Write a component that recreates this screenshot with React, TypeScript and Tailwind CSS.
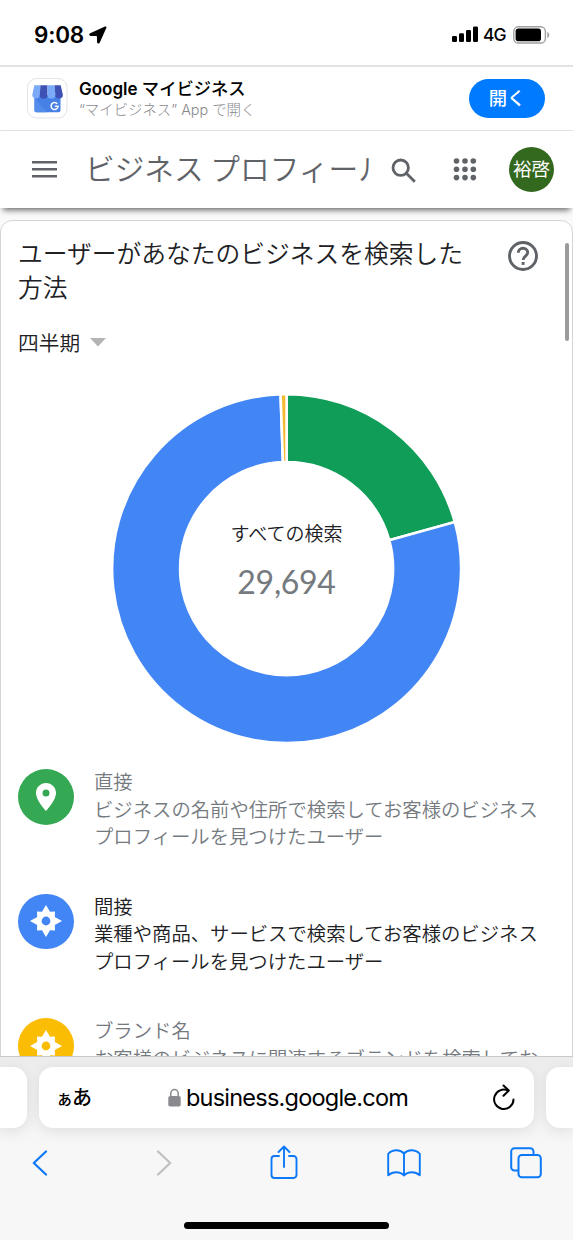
import React from "react";

type LegendItem = {
  title: string;
  lines: string[];
  color: string;
  text: string;
  icon: "pin" | "compass";
};

const legend: LegendItem[] = [
  {
    title: "直接",
    lines: ["ビジネスの名前や住所で検索してお客様のビジネス", "プロフィールを見つけたユーザー"],
    color: "bg-[#34a853]",
    text: "text-[#757a7f]",
    icon: "pin",
  },
  {
    title: "間接",
    lines: ["業種や商品、サービスで検索してお客様のビジネス", "プロフィールを見つけたユーザー"],
    color: "bg-[#4285f4]",
    text: "text-[#202124]",
    icon: "compass",
  },
  {
    title: "ブランド名",
    lines: ["お客様のビジネスに関連するブランドを検索してお"],
    color: "bg-[#fbbc04]",
    text: "text-[#757a7f]",
    icon: "compass",
  },
];

const slices = [
  { value: 20.7, color: "#109d58" },
  { value: 78.75, color: "#4285f4" },
  { value: 0.55, color: "#f4b92f" },
];

const StatusBar = () => (
  <div className="h-[67px] shrink-0 border-b-2 border-[#e2e2e4] flex justify-between pl-[34px] pr-[23px] pt-[4px]">
    <div className="flex items-center gap-[5px]">
      <span className="font-['Inter'] font-semibold text-[22.5px] tracking-[-0.2px]">9:08</span>
      <svg width="18" height="18" viewBox="0 0 18 18">
        <path d="M16 .5 1.2 7.2C-.2 7.900 0 9.800 1.600 9.900l5.700.2c.4 0 .6.200.6.600l.2 5.500c.1 1.700 2 1.900 2.700.4L17.400 1.800c.4-.9-.4-1.700-1.400-1.300z" />
      </svg>
    </div>
    <div className="flex items-center">
      <svg width="27" height="17" viewBox="0 0 27 17">
        <rect x="0" y="10" width="5" height="6" rx="1.3" />
        <rect x="7" y="7.3" width="5" height="8.7" rx="1.3" />
        <rect x="14" y="4" width="5" height="12" rx="1.3" />
        <rect x="21" y="0.5" width="5" height="15.5" rx="1.3" />
      </svg>
      <span className="font-['Inter'] font-medium text-[17.5px] ml-[4px] mt-[1px] w-[24px] tracking-[-0.9px]">4G</span>
      <svg className="ml-[6px]" width="37" height="18" viewBox="0 0 37 18">
        <rect x="0.8" y="0.8" width="31.6" height="16.2" rx="4.6" fill="none" stroke="#a0a0a0" strokeWidth="1.4" />
        <rect x="2.6" y="2.6" width="25.4" height="12.6" rx="2.8" />
        <path d="M34.3 6v6c1.2-.5 2-1.6 2-3s-.8-2.5-2-3z" fill="#a0a0a0" />
      </svg>
    </div>
  </div>
);

const StoreIcon = () => (
  <svg width="41" height="41" viewBox="0 0 41 41">
    <rect x="0.5" y="0.5" width="39.5" height="39.5" rx="9" fill="#fff" stroke="#e3e3e5" />
    <path d="M7.5 17h26v15.500a1.800 1.800 0 0 1-1.800 1.800H9.300a1.800 1.800 0 0 1-1.800-1.800z" fill="#4781e6" />
    <path d="M7.500 20 20 34.300H9.300a1.800 1.800 0 0 1-1.800-1.800z" fill="#548cec" />
    <path d="M7.300 7.200h6.400l-1 9.500a3.700 3.700 0 0 1-7.400 0z" fill="#7aaaf8" />
    <path d="M13.500 7.200h7v9.500a3.900 3.900 0 0 1-7.800 0z" fill="#3e51b5" />
    <path d="M20.500 7.200h7l.8 9.500a3.900 3.900 0 0 1-7.800 0z" fill="#7aaaf8" />
    <path d="M27.500 7.200h6.200l2.200 9.500a3.800 3.800 0 0 1-7.600 0z" fill="#3e51b5" />
    <path d="M30.300 25.800a3.500 3.500 0 1 0 .8 2.500h-3.300" fill="none" stroke="#fff" strokeWidth="1.500" />
  </svg>
);

const AppBanner = () => (
  <div className="h-[64px] shrink-0 border-b border-[#e3e3e6] flex items-center pl-[27px] pr-[28px]">
    <StoreIcon />
    <div className="ml-[11px] mt-[-1px] flex-1 whitespace-nowrap">
      <p className="font-['Inter','Noto_Sans_CJK_JP',sans-serif] font-semibold text-[17px] leading-[22px]">
        Google <span className="font-['Noto_Sans_CJK_JP'] font-medium text-[17.3px]">マイビジネス</span>
      </p>
      <p className="font-['Inter','Noto_Sans_CJK_JP',sans-serif] font-light text-[14.4px] leading-[20px] text-[#8a8a8e]">
        “マイビジネス” App で開く
      </p>
    </div>
    <button className="w-[76px] h-[39px] rounded-full bg-[#007aff] text-white font-medium text-[18.3px] pb-[1px]">
      開く
    </button>
  </div>
);

const Header = () => (
  <div className="h-[77px] shrink-0 relative z-10 bg-white flex items-center pl-[32px] pr-[19px] shadow-[0_5px_6px_-3px_rgba(0,0,0,0.6)]">
    <svg className="mt-[-2px]" width="25" height="18" viewBox="0 0 25 18" fill="#5f6368">
      <path d="M0 1h25v2.500H0zM0 8h25v2.500H0zM0 15h25v2.500H0z" />
    </svg>
    <h1 className="ml-[28px] mt-[-4px] w-[286px] overflow-hidden whitespace-nowrap font-[350] text-[29.700px] leading-[44px] text-[#5f6368]">
      ビジネス プロフィール
    </h1>
    <svg className="ml-[20px] mt-[2px]" width="26" height="26" viewBox="0 0 26 26" fill="none" stroke="#5f6368" strokeWidth="2.800">
      <circle cx="9.700" cy="9.700" r="7.700" />
      <path d="m15.300 15.300 8.500 8.500" />
    </svg>
    <svg className="ml-[36px]" width="24" height="24" viewBox="0 0 24 24" fill="#5f6368">
      {[3, 11.3, 19.6].map((y) => [3.5, 12, 20.3].map((x) => <circle key={`${x}-${y}`} cx={x} cy={y} r="2.800" />))}
    </svg>
    <div className="ml-auto w-[45px] h-[45px] rounded-full bg-[#33691e] text-white text-[18.500px] flex items-center justify-center whitespace-nowrap pb-[2px]">
      裕啓
    </div>
  </div>
);

const Donut = () => {
  const cx = 173.6;
  const cy = 173.6;
  const outer = 174.5;
  const inner = 106.5;
  const point = (r: number, pct: number) => {
    const a = (pct / 100) * Math.PI * 2;
    return `${cx + r * Math.sin(a)} ${cy - r * Math.cos(a)}`;
  };
  let start = 0;

  return (
    <div className="relative w-[349px] h-[348px] mx-auto">
      <svg className="ml-[1px]" width="348" height="348" viewBox="0 0 348 348">
        {slices.map((s) => {
          const from = start;
          const to = start + s.value;
          start = to;
          const large = s.value > 50 ? 1 : 0;
          return (
            <path
              key={s.color}
              fill={s.color}
              stroke="#fff"
              strokeWidth="2.600"
              d={`M${point(outer, from)}A${outer} ${outer} 0 ${large} 1 ${point(outer, to)}L${point(inner, to)}A${inner} ${inner} 0 ${large} 0 ${point(inner, from)}z`}
            />
          );
        })}
      </svg>
      <div className="absolute inset-0 flex flex-col items-center pt-[124px]">
        <p className="text-[19px] leading-[28px] font-[350] text-[#202124]">すべての検索</p>
        <p className="font-['Lato'] text-[32px] leading-[40px] tracking-[-0.3px] mt-[15px] text-[#757a7f]">29,694</p>
      </div>
    </div>
  );
};

const LegendIcon = ({ icon }: { icon: "pin" | "compass" }) =>
  icon === "pin" ? (
    <svg width="20" height="28" viewBox="0 0 20 28" fill="#fff">
      <path
        fillRule="evenodd"
        d="M10 0C4.500 0 0 4.400 0 9.900 0 17.200 10 28 10 28s10-10.800 10-18.100C20 4.400 15.500 0 10 0zm0 13.400a3.500 3.500 0 1 1 0-7 3.500 3.500 0 0 1 0 7z"
      />
    </svg>
  ) : (
    <svg width="32" height="32" viewBox="0 0 32 32" fill="#fff">
      <path
        fillRule="evenodd"
        d="M16 0l4 6.700 5-.2-.2 5.500L32 16l-7.200 4 .2 5.500-5-.2L16 32l-4-6.700-5 .2.200-5.500L0 16l7.200-4L7 6.500l5 .2zM16 11.600a4.400 4.400 0 1 0 0 8.800 4.400 4.400 0 0 0 0-8.800z"
      />
    </svg>
  );

const SearchCard = () => (
  <div className="relative mt-[12px] h-[860px] border border-[#d3d5d9] rounded-[12px] bg-white px-[17px]">
    <div className="flex justify-between pt-[15px]">
      <h2 className="text-[24.750px] leading-[33.500px] font-[350] text-[#202124] whitespace-nowrap">
        ユーザーがあなたのビジネスを検索した
        <br />
        方法
      </h2>
      <svg className="mt-[4px] mr-[16px]" width="32" height="32" viewBox="0 0 32 32" fill="none" stroke="#5f6368" strokeWidth="2.900">
        <circle cx="16" cy="16" r="13.500" />
        <path d="M11.300 12.800c0-2.700 2-4.500 4.700-4.500s4.700 1.800 4.700 4.300c0 3.300-4.600 3.700-4.600 7.300" />
        <path d="M16.100 22v2.900" />
      </svg>
    </div>
    <div className="flex items-center gap-[10px] mt-[23px] h-[32px]">
      <span className="text-[20.700px] leading-[32px] mt-[-1px] font-[350] text-[#202124]">四半期</span>
      <svg className="mt-[1px]" width="16" height="9" viewBox="0 0 16 9" fill="#b4b4b4">
        <path d="M0 0h16L8 8.500z" />
      </svg>
    </div>
    <div className="mt-[37px]">
      <Donut />
    </div>
    <div className="mt-[25px]">
      {legend.map((item) => (
        <div key={item.title} className="flex h-[124.600px]">
          <div className={`w-[55.5px] h-[55.5px] mt-[1px] shrink-0 rounded-full flex items-center justify-center ${item.color}`}>
            <LegendIcon icon={item.icon} />
          </div>
          <div className={`ml-[20.5px] text-[19.350px] leading-[27.700px] font-[350] whitespace-nowrap ${item.text}`}>
            <p>{item.title}</p>
            {item.lines.map((line) => (
              <p key={line}>{line}</p>
            ))}
          </div>
        </div>
      ))}
    </div>
    <div className="absolute right-[3px] top-[22px] w-[4px] h-[98px] rounded-full bg-[#9b9b9b]" />
  </div>
);

const BrowserBar = () => (
  <div className="h-[184px] shrink-0 border-t border-[#c9c9cb] bg-linear-to-b from-[#ececec] to-[#f7f7f7] to-50% flex flex-col relative z-10">
    <div className="flex gap-[12px] mt-[10px] h-[61px]">
      <div className="w-[27px] rounded-r-[14px] bg-white shadow-[0_3px_14px_rgba(0,0,0,0.09)]" />
      <div className="w-[495px] rounded-[14px] bg-white shadow-[0_3px_14px_rgba(0,0,0,0.09)] flex items-center pl-[17px] pr-[19px]">
        <span className="w-[112px] font-medium text-[20px] leading-[30px] tracking-[-1px] whitespace-nowrap">
          <span className="text-[17px]">ぁ</span>あ
        </span>
        <svg width="13" height="19" viewBox="0 0 13 19">
          <path d="M2.800 9V5.300a3.700 3.700 0 0 1 7.400 0V9" fill="none" stroke="#8a8a8e" strokeWidth="1.500" />
          <rect x="0.300" y="8" width="12.400" height="10.500" rx="1.800" fill="#8a8a8e" />
        </svg>
        <span className="ml-[5px] font-['Inter'] text-[23.500px] leading-[30px] tracking-[-0.780px]">business.google.com</span>
        <svg className="ml-auto" width="22" height="27" viewBox="0 0 22 27" fill="none" stroke="#000" strokeWidth="2" strokeLinecap="round" strokeLinejoin="round">
          <path d="M20.500 15.500A9.700 9.700 0 1 1 15.200 6.700" />
          <path d="M10.500 1.500 15.800 6.500 10.500 11.800" />
        </svg>
      </div>
      <div className="w-[27px] rounded-l-[14px] bg-white shadow-[0_3px_14px_rgba(0,0,0,0.09)]" />
    </div>
    <div className="flex items-center h-[70px] pl-[32px]">
      <svg width="16" height="26" viewBox="0 0 16 26" fill="none" stroke="#0b79f7" strokeWidth="2.200" strokeLinecap="round" strokeLinejoin="round">
        <path d="M14 1.500 1.800 13 14 24.500" />
      </svg>
      <svg className="ml-[108px]" width="16" height="26" viewBox="0 0 16 26" fill="none" stroke="#bfbfc1" strokeWidth="2.200" strokeLinecap="round" strokeLinejoin="round">
        <path d="M2 1.500 14.200 13 2 24.500" />
      </svg>
      <svg className="ml-[98px] mt-[-2px]" width="28" height="34" viewBox="0 0 28 34" fill="none" stroke="#0b79f7" strokeWidth="1.900" strokeLinecap="round" strokeLinejoin="round">
        <path d="M9 11H4.500a3 3 0 0 0-3 3v16a3 3 0 0 0 3 3h19a3 3 0 0 0 3-3V14a3 3 0 0 0-3-3H19" />
        <path d="M14 22V1.500M8.500 7 14 1.500 19.500 7" />
      </svg>
      <svg className="ml-[89px]" width="34" height="28" viewBox="0 0 34 28" fill="none" stroke="#0b79f7" strokeWidth="1.900" strokeLinecap="round" strokeLinejoin="round">
        <path d="M17 4.500C15 2.300 12.500 1.300 9.500 1.300S3.500 2.500 1.200 4.800v21.400c2.300-2 5-3 8-3s5.800 1 7.800 3.300c2-2.300 4.800-3.300 7.800-3.300s5.700 1 8 3V4.800C30.500 2.500 27.500 1.300 24.500 1.300S19 2.300 17 4.500zM17 4.500v22" />
      </svg>
      <svg className="ml-[89px] mt-[-1px]" width="32" height="32" viewBox="0 0 32 32" fill="none" stroke="#0b79f7" strokeWidth="2" strokeLinejoin="round">
        <path d="M8.500 23.500H4.500a3.300 3.300 0 0 1-3.300-3.300V4.500a3.300 3.300 0 0 1 3.300-3.300h15.700a3.300 3.300 0 0 1 3.300 3.300V8" />
        <rect x="8.500" y="8" width="22.300" height="22.300" rx="3.300" />
      </svg>
    </div>
    <div className="w-[205px] h-[7px] mt-[24px] mx-auto rounded-full bg-black" />
  </div>
);

export default function App() {
  return (
    <div className="w-[573px] h-[1240px] overflow-hidden flex flex-col bg-white text-black font-['Noto_Sans_CJK_JP',sans-serif]">
      <StatusBar />
      <AppBanner />
      <Header />
      <div className="flex-1 min-h-0 overflow-hidden bg-[#fafafa]">
        <SearchCard />
      </div>
      <BrowserBar />
    </div>
  );
}
